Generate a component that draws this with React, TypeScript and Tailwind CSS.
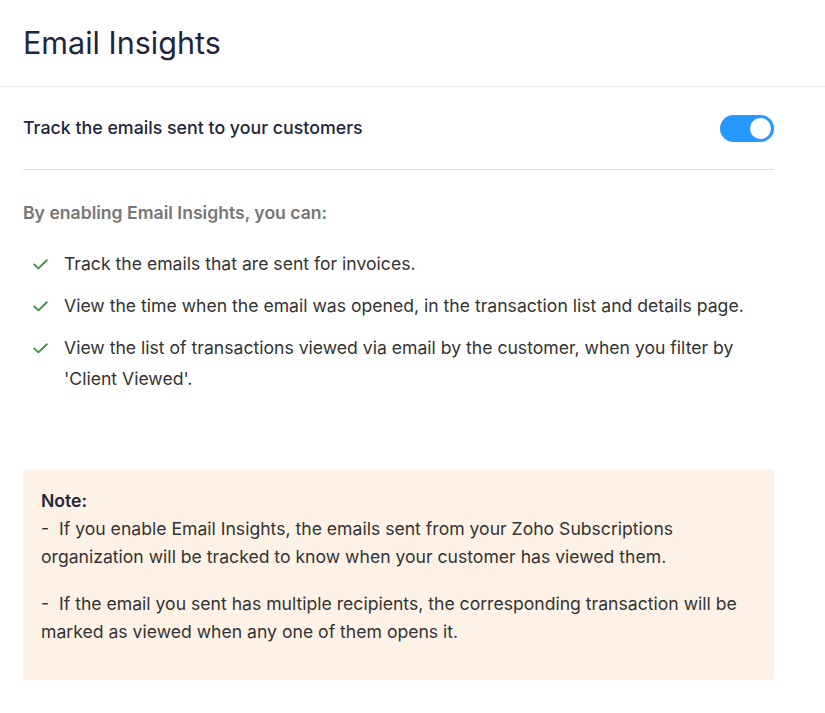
const items = [
  "Track the emails that are sent for invoices.",
  "View the time when the email was opened, in the transaction list and details page.",
  "View the list of transactions viewed via email by the customer, when you filter by 'Client Viewed'.",
]

function Tick() {
  return (
    <svg width="15" height="11" viewBox="0 0 15 11" className="mt-[11px] shrink-0" fill="none">
      <path d="M1.2 5.4 5.4 9.4 13.8 1.2" stroke="#3d9447" strokeWidth="1.9" strokeLinecap="round" strokeLinejoin="round" />
    </svg>
  )
}

export default function App() {
  return (
    <div className="min-h-screen bg-white font-['Inter',sans-serif] text-[#21263c]">
      {/* header */}
      <div className="flex h-[87px] items-center border-b border-[#ebebeb] px-[23px]">
        <h1 className="text-[30.5px] font-normal leading-none text-[#21263c]">Email Insights</h1>
      </div>

      <div className="pl-[23px] pr-[51px]">
        {/* toggle row */}
        <div className="flex h-[83px] items-center justify-between border-b border-[#e0e0e0]">
          <span className="text-[17.8px] font-medium text-[#21263c]">Track the emails sent to your customers</span>
          <button
            type="button"
            className="flex h-[27px] w-[54px] items-center justify-end rounded-full bg-[#2698ff] px-[3px]"
          >
            <span className="block h-[21px] w-[21px] rounded-full bg-white" />
          </button>
        </div>

        <p className="mt-[31px] text-[17.6px] leading-[24px] font-semibold text-[#777777]">By enabling Email Insights, you can:</p>

        <ul className="mt-[23px] flex flex-col gap-[11px]">
          {items.map((t) => (
            <li key={t} className="flex items-start gap-[16px] pl-[10px] text-[17.6px] leading-[31px] text-[#333333]">
              <Tick />
              <span>{t}</span>
            </li>
          ))}
        </ul>

        {/* note */}
        <div className="mt-[76px] h-[210px] rounded-[2px] bg-[#fef2e6] px-[18px] pt-[17px] text-[17.6px] leading-[28px] text-[#333333]">
          <p className="font-semibold text-[#21263c]">Note:</p>
          <p>-&nbsp; If you enable Email Insights, the emails sent from your Zoho Subscriptions organization will be tracked to know when your customer has viewed them.</p>
          <p className="mt-[19px]">-&nbsp; If the email you sent has multiple recipients, the corresponding transaction will be marked as viewed when any one of them opens it.</p>
        </div>
      </div>
    </div>
  )
}
